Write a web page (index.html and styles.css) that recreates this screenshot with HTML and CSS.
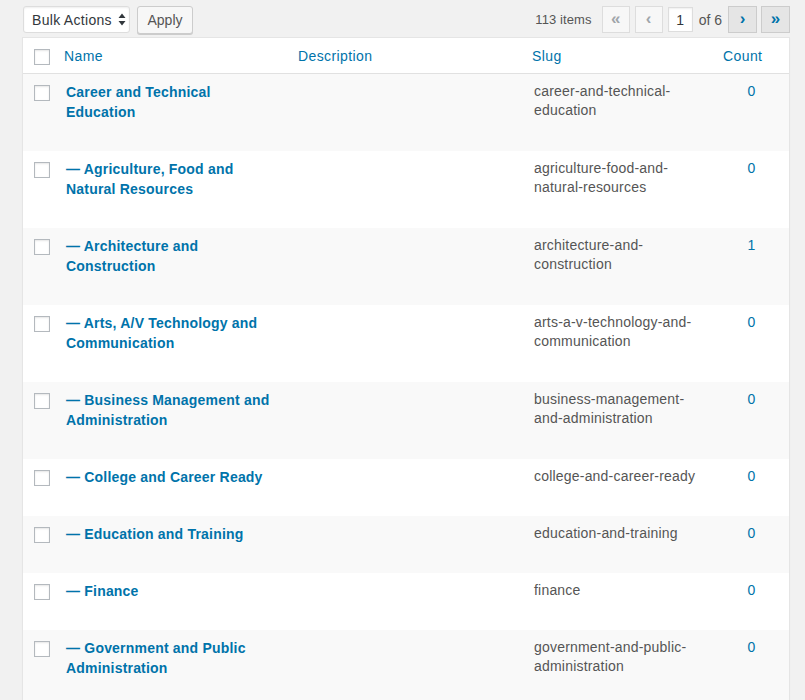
FILE: index.html
```html
<!DOCTYPE html>
<html>
<head>
<meta charset="utf-8">
<link rel="stylesheet" href="styles.css">
</head>
<body>
<div class="wrap">
  <div class="tablenav">
    <div class="actions">
      <div class="select">
        <span>Bulk Actions</span>
        <svg class="updown" width="8" height="13" viewBox="0 0 8 13"><path d="M4 0.5 L7.5 5 L0.5 5 Z M4 12.5 L7.5 8 L0.5 8 Z" fill="#32373c"/></svg>
      </div>
      <button class="btn">Apply</button>
    </div>
    <div class="pages">
      <span class="num">113 items</span>
      <span class="pbtn off first">&laquo;</span>
      <span class="pbtn off">&lsaquo;</span>
      <span class="pinput">1</span>
      <span class="of">of 6</span>
      <span class="pbtn on">&rsaquo;</span>
      <span class="pbtn on last">&raquo;</span>
    </div>
  </div>

  <table class="list">
    <colgroup>
      <col class="c-cb"><col class="c-name"><col class="c-desc"><col class="c-slug"><col class="c-count">
    </colgroup>
    <thead>
      <tr>
        <th class="cb"><span class="check"></span></th>
        <th class="h-name"><a>Name</a></th>
        <th class="h-desc"><a>Description</a></th>
        <th class="h-slug"><a>Slug</a></th>
        <th class="h-count"><a>Count</a></th>
      </tr>
    </thead>
    <tbody>
      <tr class="alt">
        <td class="cb"><span class="check"></span></td>
        <td class="name"><a class="title">Career and Technical Education</a><div class="row-actions"></div></td>
        <td class="desc"></td>
        <td class="slug">career-and-technical-education</td>
        <td class="count"><a>0</a></td>
      </tr>
      <tr>
        <td class="cb"><span class="check"></span></td>
        <td class="name"><a class="title">— Agriculture, Food and Natural Resources</a><div class="row-actions"></div></td>
        <td class="desc"></td>
        <td class="slug">agriculture-food-and-natural-resources</td>
        <td class="count"><a>0</a></td>
      </tr>
      <tr class="alt">
        <td class="cb"><span class="check"></span></td>
        <td class="name"><a class="title">— Architecture and Construction</a><div class="row-actions"></div></td>
        <td class="desc"></td>
        <td class="slug">architecture-and-construction</td>
        <td class="count"><a>1</a></td>
      </tr>
      <tr>
        <td class="cb"><span class="check"></span></td>
        <td class="name"><a class="title">— Arts, A/V Technology and Communication</a><div class="row-actions"></div></td>
        <td class="desc"></td>
        <td class="slug">arts-a-v-technology-and-communication</td>
        <td class="count"><a>0</a></td>
      </tr>
      <tr class="alt">
        <td class="cb"><span class="check"></span></td>
        <td class="name"><a class="title">— Business Management and Administration</a><div class="row-actions"></div></td>
        <td class="desc"></td>
        <td class="slug">business-management-and-administration</td>
        <td class="count"><a>0</a></td>
      </tr>
      <tr>
        <td class="cb"><span class="check"></span></td>
        <td class="name"><a class="title">— College and Career Ready</a><div class="row-actions"></div></td>
        <td class="desc"></td>
        <td class="slug">college-and-career-ready</td>
        <td class="count"><a>0</a></td>
      </tr>
      <tr class="alt">
        <td class="cb"><span class="check"></span></td>
        <td class="name"><a class="title">— Education and Training</a><div class="row-actions"></div></td>
        <td class="desc"></td>
        <td class="slug">education-and-training</td>
        <td class="count"><a>0</a></td>
      </tr>
      <tr>
        <td class="cb"><span class="check"></span></td>
        <td class="name"><a class="title">— Finance</a><div class="row-actions"></div></td>
        <td class="desc"></td>
        <td class="slug">finance</td>
        <td class="count"><a>0</a></td>
      </tr>
      <tr class="alt">
        <td class="cb"><span class="check"></span></td>
        <td class="name"><a class="title">— Government and Public Administration</a><div class="row-actions"></div></td>
        <td class="desc"></td>
        <td class="slug">government-and-public-administration</td>
        <td class="count"><a>0</a></td>
      </tr>
    </tbody>
  </table>
</div>
</body>
</html>
```

FILE: styles.css
```css
html, body {
  margin: 0;
  padding: 0;
  background: #f1f1f1;
  font-family: "Liberation Sans", Arial, sans-serif;
  color: #32373c;
  height: 700px;
  overflow: hidden;
}

.wrap {
  width: 768px;
  margin-left: 22px;
}

.tablenav {
  display: flex;
  justify-content: space-between;
  align-items: center;
  height: 27px;
  padding-top: 6px;
  margin-bottom: 4px;
}

.actions {
  display: flex;
  align-items: center;
}

.select {
  box-sizing: border-box;
  width: 107px;
  height: 27px;
  margin-left: 1px;
  background: #fff;
  border: 1px solid #ddd;
  border-radius: 3px;
  box-shadow: inset 0 1px 2px rgba(0,0,0,.07);
  display: flex;
  align-items: center;
  justify-content: space-between;
  padding: 0 3px 0 8px;
  font-size: 14px;
  letter-spacing: 0.3px;
  color: #32373c;
}

.updown {
  display: block;
}

.btn {
  box-sizing: border-box;
  margin-left: 7px;
  width: 56px;
  height: 28px;
  background: #f7f7f7;
  border: 1px solid #ccc;
  border-radius: 3px;
  box-shadow: 0 1px 0 #ccc;
  font-family: "Liberation Sans", Arial, sans-serif;
  font-size: 14px;
  color: #555;
  padding: 0;
}

.pages {
  display: flex;
  align-items: center;
  font-size: 13px;
  color: #555;
}

.num {
  margin-right: 10px;
  letter-spacing: 0.1px;
}

.pbtn {
  box-sizing: border-box;
  width: 29px;
  height: 27px;
  display: flex;
  align-items: center;
  justify-content: center;
  border: 1px solid #ccc;
  border-radius: 0;
  font-size: 17px;
  font-weight: bold;
  margin-left: 5px;
  padding-bottom: 2px;
}

.pbtn.first {
  margin-left: 0;
  width: 28px;
}

.pbtn.off {
  background: #f7f7f7;
  border-color: #ddd;
  color: #a0a5aa;
  width: 28px;
}

.pbtn.on {
  background: #e5e5e5;
  color: #0073aa;
}

.pbtn.last {
  margin-left: 4px;
}

.pinput {
  box-sizing: border-box;
  width: 25px;
  height: 25px;
  margin-left: 5px;
  background: #fff;
  border: 1px solid #ddd;
  box-shadow: inset 0 1px 2px rgba(0,0,0,.07);
  display: flex;
  align-items: center;
  justify-content: center;
  font-size: 14px;
  color: #32373c;
}

.of {
  font-size: 14px;
  margin: 0 1px 0 6px;
}

.list {
  width: 768px;
  table-layout: fixed;
  border-collapse: separate;
  border-spacing: 0;
  background: #fff;
  border: 1px solid #e5e5e5;
  box-shadow: 0 1px 1px rgba(0,0,0,.04);
}

.c-cb { width: 33px; }
.c-name { width: 232px; }
.c-desc { width: 236px; }
.c-slug { width: 190px; }
.c-count { width: 75px; }

.list th {
  text-align: left;
  font-weight: normal;
  font-size: 14px;
  line-height: 19px;
  letter-spacing: 0.4px;
  padding: 9px 0 7px;
  border-bottom: 1px solid #e1e1e1;
  vertical-align: top;
}

.list th a {
  color: #0073aa;
}

.list th.cb,
.list td.cb {
  padding: 11px 0 0 11px;
  vertical-align: top;
}

.list th.cb {
  padding-top: 11px;
  padding-bottom: 8px;
}

.check {
  display: block;
  box-sizing: border-box;
  width: 16px;
  height: 16px;
  background: #fff;
  border: 1px solid #b4b9be;
  box-shadow: inset 0 1px 2px rgba(0,0,0,.1);
}

.h-name { padding-left: 8px !important; }
.h-desc { padding-left: 10px !important; }
.h-slug { padding-left: 8px !important; }
.h-count { padding-left: 9px !important; }

.list td {
  vertical-align: top;
  padding: 8px 10px;
  font-size: 14px;
  line-height: 19px;
}

.list tr.alt td {
  background: #f9f9f9;
}

.list td.name {
  padding-right: 16px;
}

.title {
  display: block;
  font-weight: bold;
  font-size: 14px;
  line-height: 20px;
  letter-spacing: 0.2px;
  color: #0073aa;
}

.row-actions {
  height: 21px;
}

.list td.slug {
  color: #555;
  letter-spacing: 0.2px;
  padding-top: 8px;
}

.list td.count {
  text-align: center;
  padding-left: 0;
  padding-right: 0;
  padding-top: 8px;
  font-size: 14px;
}

.list td.count a {
  color: #0073aa;
}
```
